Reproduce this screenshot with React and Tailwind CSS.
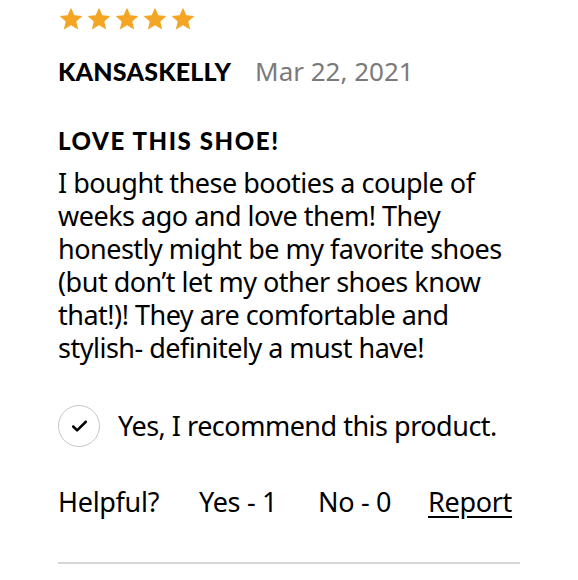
import { Check } from "lucide-react";

const body = { fontFamily: '"Noto Sans", sans-serif' };

function Star() {
  return (
    <svg viewBox="0 0 24 24" className="h-[26px] w-[26px]">
      <path
        d="M12 1.6l3.1 6.9 7.4.7-5.6 5 1.7 7.4L12 17.7l-6.6 3.9 1.7-7.4-5.6-5 7.4-.7z"
        fill="#f5a524"
      />
    </svg>
  );
}

export default function App() {
  return (
    <div className="min-h-screen w-full bg-white px-[58px] text-black">
      {/* Rating */}
      <div className="flex gap-[2px] pt-[6px]">
        {[0, 1, 2, 3, 4].map((i) => (
          <Star key={i} />
        ))}
      </div>

      {/* Author + date */}
      <div className="mt-[20px] flex items-baseline gap-[24px]">
        <span className="font-['Lato'] text-[25px] font-black tracking-[0.2px]">
          KANSASKELLY
        </span>
        <span className="font-['Noto_Sans'] text-[26px] text-[#7a7a7a]">
          Mar 22, 2021
        </span>
      </div>

      {/* Title */}
      <h2 className="mt-[35px] font-['Lato'] text-[24px] font-black leading-[30px] tracking-[1.6px]">
        LOVE THIS SHOE!
      </h2>

      {/* Body */}
      <p
        className="mt-[10px] text-[27px] leading-[33px] tracking-[-0.5px]"
        style={body}
      >
        I bought these booties a couple of weeks ago and love them! They
        honestly might be my favorite shoes (but don’t let my other shoes know
        that!)! They are comfortable and stylish- definitely a must have!
      </p>

      {/* Recommend */}
      <div className="mt-[41px] flex items-center gap-[18px]">
        <span className="flex h-[42px] w-[42px] items-center justify-center rounded-full border border-[#c8c8c8]">
          <Check size={19} strokeWidth={3.2} />
        </span>
        <span className="font-['Noto_Sans'] text-[27px] tracking-[-0.5px]">
          Yes, I recommend this product.
        </span>
      </div>

      {/* Helpful */}
      <div className="mt-[35px] flex items-center font-['Noto_Sans'] text-[27px] tracking-[-0.3px]">
        <span className="w-[141px]">Helpful?</span>
        <span className="w-[119px]">Yes - 1</span>
        <span className="w-[110px]">No - 0</span>
        <span className="underline underline-offset-[4px]">Report</span>
      </div>

      <hr className="mt-[39px] border-t-2 border-[#d6d6d6]" />
    </div>
  );
}
